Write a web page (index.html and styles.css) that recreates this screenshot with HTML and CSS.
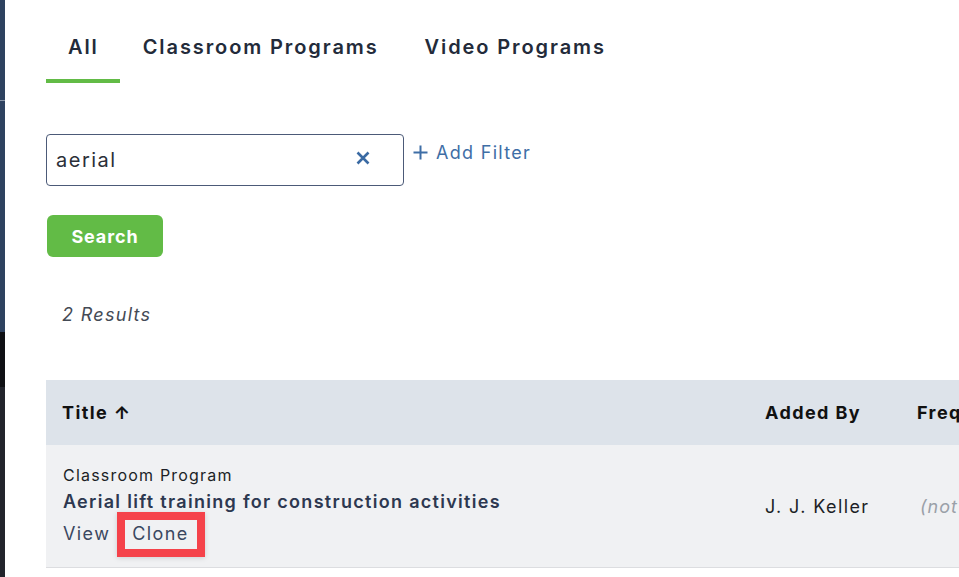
FILE: index.html
```html
<!DOCTYPE html>
<html>
<head>
<meta charset="utf-8">
<link rel="stylesheet" href="styles.css">
</head>
<body>
<div class="shell">
  <aside class="sidebar">
    <div class="sb-top"><div class="sb-line"></div></div>
    <div class="sb-black"></div>
    <div class="sb-bottom"></div>
  </aside>
  <main class="main">
    <nav class="tabs">
      <a class="tab active">All</a>
      <a class="tab">Classroom Programs</a>
      <a class="tab">Video Programs</a>
    </nav>
    <div class="filters">
      <div class="search-box">
        <span class="search-value">aerial</span>
        <svg class="clear" width="16" height="16" viewBox="0 0 16 16"><path d="M2.5 2.5 L13.5 13.5 M13.5 2.5 L2.5 13.5" stroke="#3a6aa3" stroke-width="2.6" stroke-linecap="butt"/></svg>
      </div>
      <a class="add-filter"><svg class="plus" width="15" height="15" viewBox="0 0 15 15"><path d="M7.5 0.5 V14.5 M0.5 7.5 H14.5" stroke="#3e6ea6" stroke-width="2"/></svg>Add Filter</a>
    </div>
    <button class="search-btn">Search</button>
    <p class="results">2 Results</p>
    <div class="table">
      <div class="thead">
        <div class="c-title">Title <span class="arrow">↑</span></div>
        <div class="c-added">Added By</div>
        <div class="c-freq">Frequency</div>
      </div>
      <div class="trow">
        <div class="c-title">
          <div class="type">Classroom Program</div>
          <div class="name">Aerial lift training for construction activities</div>
          <div class="actions"><a>View</a><a class="clone">Clone<span class="highlight"></span></a></div>
        </div>
        <div class="c-added">J. J. Keller</div>
        <div class="c-freq"><span class="na">(not set)</span></div>
      </div>
    </div>
  </main>
</div>
</body>
</html>
```
FILE: styles.css
```css
* { box-sizing: border-box; }
html, body { margin: 0; padding: 0; }
body {
  width: 959px;
  height: 577px;
  overflow: hidden;
  background: #fff;
  font-family: Inter, "Noto Sans", sans-serif;
  color: #222a38;
}
.shell { display: flex; height: 577px; }
.sidebar { width: 5px; flex: none; display: flex; flex-direction: column; }
.sb-top { height: 332px; background: #2e4260; padding-top: 100px; }
.sb-line { height: 1px; background: #8a96a8; }
.sb-black { height: 55px; background: #0f1014; }
.sb-bottom { flex: 1; background: #22242c; }
.main { flex: 1; padding-left: 41px; min-width: 0; overflow: hidden; }

.tabs { display: flex; padding-top: 28px; }
.tab {
  font-size: 20px;
  font-weight: 600;
  letter-spacing: 1.9px;
  color: #232b3a;
  padding: 6px 23px 0 23px;
  height: 55px;
  border-bottom: 4px solid transparent;
  line-height: 26px;
  white-space: nowrap;
}
.tab:first-child { padding-left: 22px; padding-right: 21px; }
.tab.active { border-bottom-color: #62bb46; }

.filters { display: flex; align-items: flex-start; margin-top: 51px; }
.search-box {
  width: 358px;
  height: 52px;
  border: 1px solid #4c5a78;
  border-radius: 4px;
  display: flex;
  align-items: center;
  justify-content: space-between;
  padding: 0 32px 0 9px;
}
.search-value { font-size: 20px; color: #2b2f38; letter-spacing: 1.5px; }
.clear { margin-top: -4px; }
.add-filter {
  display: flex;
  align-items: center;
  margin-left: 9px;
  margin-top: 7px;
  font-size: 18px;
  color: #3e6ea6;
  letter-spacing: 1.3px;
  line-height: 24px;
  white-space: nowrap;
}
.plus { margin-right: 8px; margin-top: -1px; }

.search-btn {
  display: block;
  margin-top: 29px;
  margin-left: 1px;
  width: 116px;
  height: 42px;
  border: none;
  border-radius: 6px;
  background: #62bb46;
  color: #fff;
  font-family: Inter, "Noto Sans", sans-serif;
  font-size: 18px;
  font-weight: 700;
  letter-spacing: 0.9px;
}
.results {
  margin: 47px 0 0 16px;
  font-size: 18px;
  font-style: italic;
  color: #444a55;
  letter-spacing: 1.3px;
  line-height: 22px;
}

.table { margin-top: 54px; width: 1000px; }
.thead, .trow { display: flex; white-space: nowrap; }
.thead {
  height: 65px;
  background: #dde3ea;
  align-items: center;
  font-size: 18px;
  font-weight: 700;
  color: #111;
  letter-spacing: 1.4px;
}
.trow {
  height: 123px;
  background: #f0f1f3;
  border-bottom: 1px solid #dcdde0;
  align-items: center;
  padding-bottom: 2px;
}
.c-title { width: 703px; padding-left: 16px; }
.c-added { width: 152px; padding-left: 16px; }
.c-freq { flex: 1; padding-left: 16px; }
.trow .c-added, .trow .c-freq { margin-top: 3px; }
.trow .c-added { font-size: 18px; color: #1c1f26; letter-spacing: 1.4px; }
.na { font-style: italic; color: #9aa0a8; font-size: 18px; letter-spacing: 1px; padding-left: 3px; }
.type { font-size: 16px; color: #1c1f26; letter-spacing: 1.2px; line-height: 20px; padding-left: 1px; }
.name { font-size: 18px; font-weight: 600; color: #2d3850; letter-spacing: 1.3px; line-height: 22px; margin-top: 6px; padding-left: 1px; }
.actions { display: flex; gap: 22px; font-size: 18px; color: #3a4760; letter-spacing: 1.4px; margin-top: 10px; line-height: 22px; padding-left: 1px; }
.clone { position: relative; }
.highlight {
  position: absolute;
  left: -15px; right: -16px;
  top: -11px; bottom: -12px;
  border: 8px solid #f5424a;
  box-shadow: 0 1px 5px rgba(0,0,0,0.15);
}
```
